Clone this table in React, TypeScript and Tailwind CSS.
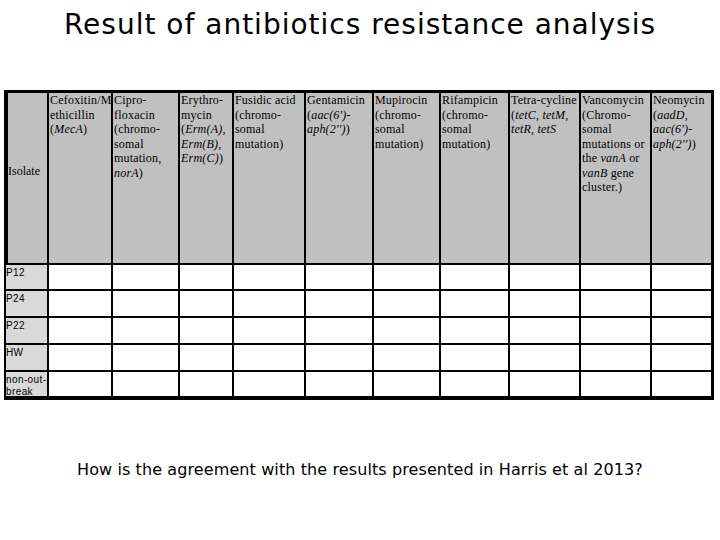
import { Fragment, type ReactNode } from "react";

const I = ({ children }: { children: ReactNode }) => <i>{children}</i>;

const COLS = [39, 62, 65, 52, 70, 66, 65, 67, 69, 69, 59];

const HEADERS: ReactNode[][] = [
  [
    "Cefoxitin/M",
    "ethicillin",
    <>
      (<I>MecA</I>)
    </>,
  ],
  [
    "Cipro-",
    "floxacin",
    "(chromo-",
    "somal",
    "mutation,",
    <>
      <I>norA</I>)
    </>,
  ],
  [
    "Erythro-",
    "mycin",
    <>
      (<I>Erm(A),</I>
    </>,
    <I>Erm(B),</I>,
    <>
      <I>Erm(C)</I>)
    </>,
  ],
  ["Fusidic acid", "(chromo-", "somal", "mutation)"],
  [
    "Gentamicin",
    <>
      (<I>aac(6')-</I>
    </>,
    <>
      <I>aph(2'')</I>)
    </>,
  ],
  ["Mupirocin", "(chromo-", "somal", "mutation)"],
  ["Rifampicin", "(chromo-", "somal", "mutation)"],
  [
    "Tetra-cycline",
    <>
      (<I>tetC, tetM,</I>
    </>,
    <I>tetR, tetS</I>,
  ],
  [
    "Vancomycin",
    "(Chromo-",
    "somal",
    "mutations or",
    <>
      the <I>vanA</I> or
    </>,
    <>
      <I>vanB</I> gene
    </>,
    "cluster.)",
  ],
  [
    "Neomycin",
    <>
      (<I>aadD,</I>
    </>,
    <I>aac(6')-</I>,
    <>
      <I>aph(2'')</I>)
    </>,
  ],
];

const ROWS: { label: ReactNode; h: number }[] = [
  { label: "P12", h: 24 },
  { label: "P24", h: 25 },
  { label: "P22", h: 25 },
  { label: "HW", h: 25 },
  {
    label: (
      <>
        non-out-
        <br />
        break
      </>
    ),
    h: 24,
  },
];

export default function App() {
  const template = COLS.map((c) => `${c}px`).join(" ");
  const rowTemplate = ["170px", ...ROWS.map((r) => `${r.h}px`)].join(" ");

  return (
    <div className="flex h-[540px] w-[720px] flex-col overflow-hidden bg-white text-black">
      <h1 className="pt-[8px] text-center text-[28px] leading-[34px] tracking-[1px] font-normal font-['DejaVu_Sans',sans-serif]">
        Result of antibiotics resistance analysis
      </h1>

      <div className="ml-[4px] mt-[48px] w-fit bg-black pt-[3px] pl-[4px] pr-[3px] pb-[4px]">
        <div
          className="grid gap-[2px]"
          style={{ gridTemplateColumns: template, gridTemplateRows: rowTemplate }}
        >
          <div className="flex items-center bg-[#c0c0c0] pb-[14px] font-['Liberation_Serif',serif] text-[12px] leading-[14.5px]">
            Isolate
          </div>
          {HEADERS.map((lines, i) => (
            <div
              key={i}
              className="bg-[#c0c0c0] pl-[1px] font-['Liberation_Serif',serif] text-[12px] leading-[14.5px] tracking-[0.2px] whitespace-nowrap"
            >
              {lines.map((l, j) => (
                <div key={j}>{l}</div>
              ))}
            </div>
          ))}

          {ROWS.map((r, ri) => (
            <Fragment key={ri}>
              <div className="-ml-[2px] bg-[#d9d9d9] pt-[2px] font-['Liberation_Sans',sans-serif] text-[10px] leading-[12px] tracking-[0.4px]">
                {r.label}
              </div>
              {HEADERS.map((_, ci) => (
                <div key={ci} className="bg-white" />
              ))}
            </Fragment>
          ))}
        </div>
      </div>

      <p className="mt-[60px] text-center font-['DejaVu_Sans',sans-serif] text-[16px] leading-[20px] tracking-[0.1px]">
        How is the agreement with the results presented in Harris et al 2013?
      </p>
    </div>
  );
}
